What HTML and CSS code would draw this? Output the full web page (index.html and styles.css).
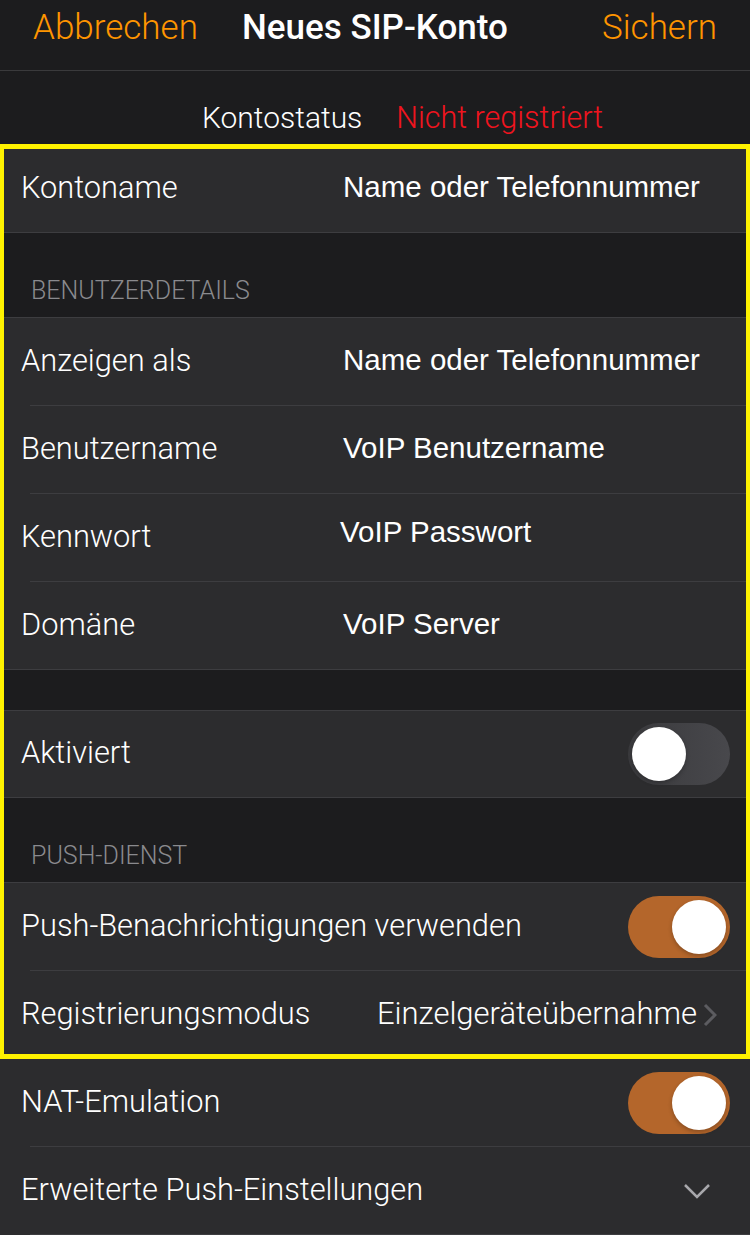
FILE: index.html
```html
<!DOCTYPE html>
<html>
    <head>
        <meta charset="UTF-8" />
        <meta name="viewport" content="width=device-width, initial-scale=1.0" />
        <title>Neues SIP-Konto</title>
        <link rel="stylesheet" href="styles.css">
    </head>
    <body>
        <div class="page">
            <div class="nav">
                <span class="nav-btn">Abbrechen</span>
                <span class="nav-title">Neues SIP-Konto</span>
                <span class="nav-btn nav-right">Sichern</span>
            </div>

            <div class="status">
                <span>Kontostatus</span>
                <span class="status-red">Nicht registriert</span>
            </div>

            <div class="group">
                <div class="row"><span class="label">Kontoname</span><span class="value">Name oder Telefonnummer</span></div>
            </div>

            <div class="section-head">BENUTZERDETAILS</div>
            <div class="group">
                <div class="row"><span class="label">Anzeigen als</span><span class="value">Name oder Telefonnummer</span></div>
                <div class="row"><span class="label">Benutzername</span><span class="value">VoIP Benutzername</span></div>
                <div class="row"><span class="label">Kennwort</span><span class="value value-up">VoIP Passwort</span></div>
                <div class="row"><span class="label">Domäne</span><span class="value">VoIP Server</span></div>
            </div>

            <div class="spacer"></div>
            <div class="group">
                <div class="row row-single"><span class="label">Aktiviert</span><span class="toggle"><span class="knob"></span></span></div>
            </div>

            <div class="section-head">PUSH-DIENST</div>
            <div class="group group-open">
                <div class="row"><span class="label">Push-Benachrichtigungen verwenden</span><span class="toggle on"><span class="knob"></span></span></div>
                <div class="row">
                    <span class="label">Registrierungsmodus</span>
                    <span class="detail">Einzelgeräteübernahme</span>
                    <svg class="chev-right" width="14" height="24" viewBox="0 0 14 24"><path d="M2 2 L12 12 L2 22" fill="none" stroke="#5c5c60" stroke-width="3"/></svg>
                </div>
                <div class="row"><span class="label">NAT-Emulation</span><span class="toggle on"><span class="knob"></span></span></div>
                <div class="row">
                    <span class="label">Erweiterte Push-Einstellungen</span>
                    <svg class="chev-down" width="28" height="16" viewBox="0 0 28 16"><path d="M2 2 L14 14 L26 2" fill="none" stroke="#a8a8ac" stroke-width="2.5"/></svg>
                </div>
            </div>

            <div class="highlight"></div>
        </div>
    </body>
</html>
```

FILE: styles.css
```css
*{
    box-sizing: border-box;
}
body{
    margin: 0;
    background-color: #1c1c1e;
    font-family: Roboto, "Noto Sans", sans-serif;
    font-weight: 300;
    color: #fff;
}
.page{
    position: relative;
    width: 750px;
    height: 1235px;
    overflow: hidden;
}

/* top bar */
.nav{
    height: 71px;
    display: grid;
    grid-template-columns: 1fr auto 1fr;
    align-items: center;
    padding: 0 33px 16px 33px;
    border-bottom: 1px solid #3a3a3c;
    font-size: 35px;
}
.nav-btn{
    color: #ff9500;
}
.nav-right{
    text-align: right;
}
.nav-title{
    font-weight: 500;
}

.status{
    height: 74px;
    display: flex;
    align-items: center;
    gap: 34px;
    padding: 18px 0 0 202px;
    font-size: 30px;
}
.status-red{
    color: #f0141e;
    font-size: 30.5px;
}

/* lists */
.group{
    background-color: #2c2c2e;
    border-top: 1px solid #3d3d40;
    border-bottom: 1px solid #3d3d40;
}
.group:nth-child(3){
    border-top: none;
}
.row{
    height: 88px;
    display: flex;
    align-items: center;
    padding: 0 20px 0 21px;
    background: linear-gradient(#3d3d40, #3d3d40) no-repeat 30px 100% / calc(100% - 30px) 1px;
}
.row:last-child{
    background: none;
    height: 87px;
}
.row.row-single{
    height: 86px;
}
.group-open{
    border-bottom: none;
}
.group-open .row:last-child{
    height: 88px;
    background: linear-gradient(#3d3d40, #3d3d40) no-repeat 30px 100% / calc(100% - 30px) 1px;
}
.label{
    font-size: 30.8px;
    min-width: 322px;
    white-space: nowrap;
    padding-bottom: 3px;
}
.value{
    font-family: "Liberation Sans", Arial, sans-serif;
    font-weight: 400;
    font-size: 29.5px;
    margin-bottom: 4px;
}
.value-up{
    margin-bottom: 12px;
    margin-left: -3px;
}
.detail{
    margin-left: auto;
    font-size: 31px;
    padding-bottom: 3px;
}
.chev-right{
    margin-left: 6px;
    margin-right: 13px;
}
.chev-down{
    margin-left: auto;
    margin-right: 19px;
}

.section-head{
    height: 84px;
    display: flex;
    align-items: flex-end;
    padding: 0 0 12px 31px;
    font-size: 25px;
    color: #8a8a8e;
}
.spacer{
    height: 40px;
}

/* switches */
.toggle{
    margin-left: auto;
    width: 102px;
    height: 62px;
    border-radius: 31px;
    background: linear-gradient(90deg, #3a3a3d, #48484c);
    padding: 4px;
    display: flex;
}
.toggle .knob{
    width: 54px;
    height: 54px;
    border-radius: 50%;
    background-color: #fff;
    box-shadow: 0 2px 4px rgba(0,0,0,0.25);
}
.toggle.on{
    background: #b4662b;
    justify-content: flex-end;
}

/* yellow marker frame over the edited fields */
.highlight{
    position: absolute;
    left: 0;
    top: 144px;
    width: 750px;
    height: 915px;
    border: 4px solid #fff200;
    border-top-width: 5px;
    border-bottom-width: 5px;
    pointer-events: none;
}
```
